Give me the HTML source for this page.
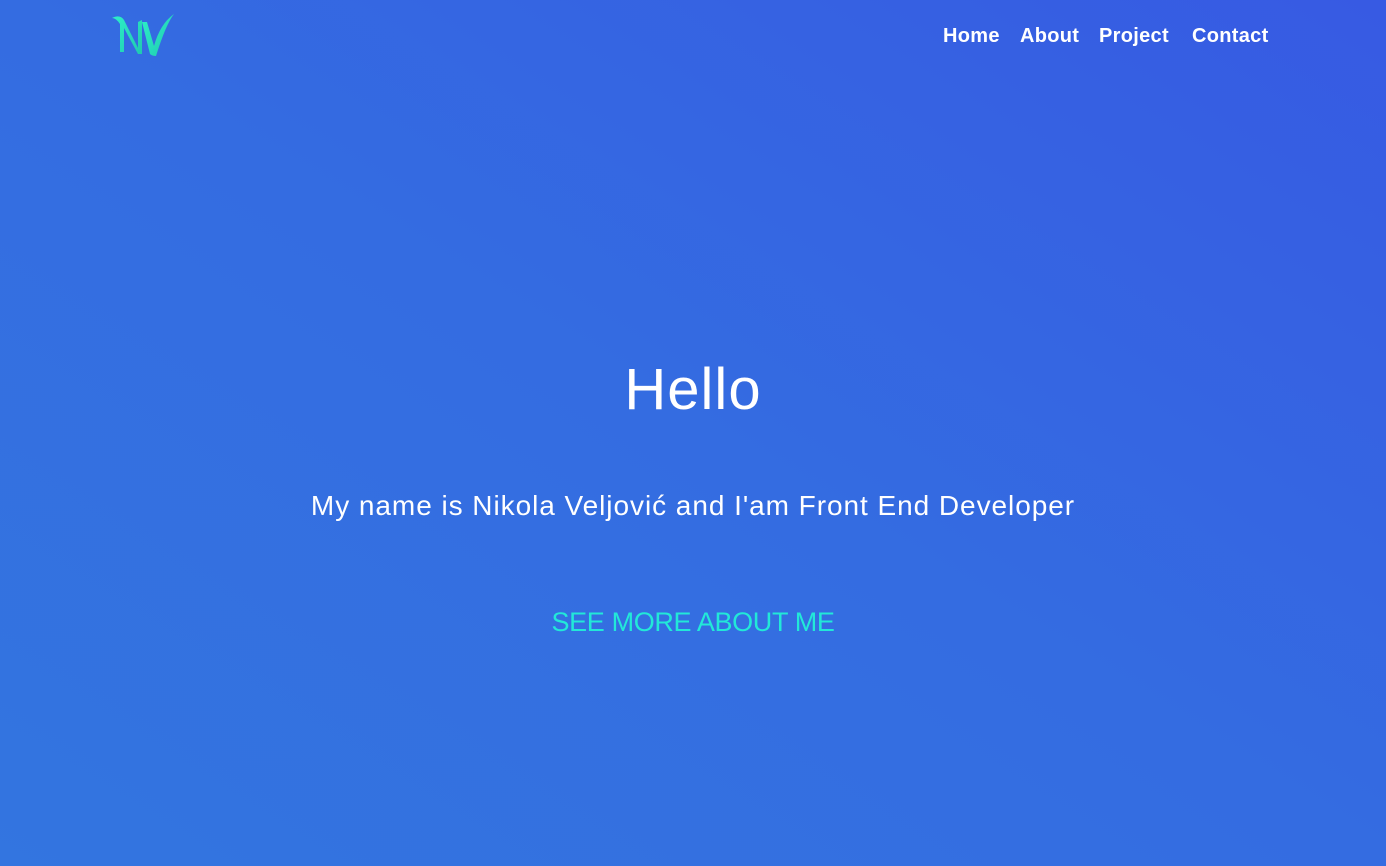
<!DOCTYPE html>
<html><head><meta charset="utf-8">
<style>
html,body{margin:0;padding:0;}
body{width:1386px;height:866px;overflow:hidden;position:relative;
background:linear-gradient(to top right,#3375e0 0%,#346ce1 50%,#375ae3 100%);
font-family:"Liberation Sans",sans-serif;color:#fff;}
.nav{position:absolute;top:25px;font-size:20px;font-weight:bold;letter-spacing:0.3px;}
.nav span{position:absolute;white-space:nowrap;}
h1{position:absolute;top:356px;left:0;width:1386px;text-align:center;margin:0;font-weight:normal;font-size:58px;letter-spacing:1px;}
.sub{position:absolute;top:490px;left:0;width:1386px;text-align:center;font-size:28px;letter-spacing:0.95px;}
.btn{position:absolute;top:607px;left:0;width:1386px;text-align:center;font-size:27px;color:#22e8d8;letter-spacing:-0.35px;}
</style></head><body>
<svg style="position:absolute;left:108px;top:10px" width="70" height="50" viewBox="0 0 70 50">
<defs><linearGradient id="g" x1="0" y1="0" x2="1" y2="1"><stop offset="0" stop-color="#2ef0c8"/><stop offset="1" stop-color="#1fc9b0"/></linearGradient></defs>
<path d="M4 8 Q12 4 16 10 L30 38 L30 12 L34 10 L34 44 L30 44 L16 18 L16 42 L12 42 L12 14 Q8 8 4 8Z" fill="url(#g)"/>
<path d="M34 12 L39 12 L46 36 Q52 14 66 4 Q58 14 48 46 Q44 46 42 44 Z" fill="url(#g)"/>
</svg>
<div class="nav">
<span style="left:943px">Home</span>
<span style="left:1020px">About</span>
<span style="left:1099px">Project</span>
<span style="left:1192px">Contact</span>
</div>
<h1>Hello</h1>
<div class="sub">My name is Nikola Veljović and I'am Front End Developer</div>
<div class="btn">SEE MORE ABOUT ME</div>
</body></html>
